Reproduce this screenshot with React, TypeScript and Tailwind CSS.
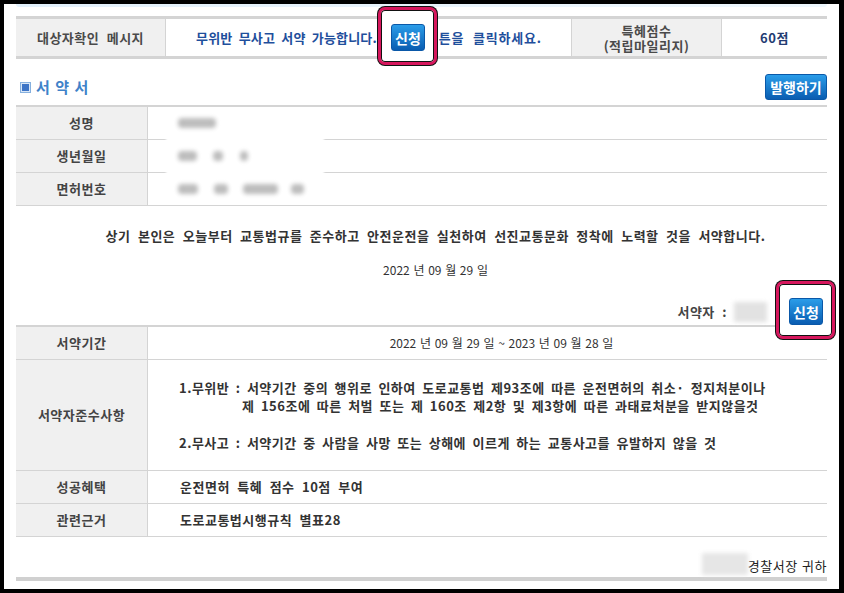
function ApplyButton() {
  return (
    <span className="relative inline-flex align-middle">
      <span className="absolute -left-[13px] -right-[12px] -top-[17px] -bottom-[14px] z-10 rounded-[7px] border-[3px] border-[#d6175d] bg-white shadow-[0_0_0_1px_#111,inset_0_0_0_1px_#111]" />
      <span className="relative z-20 flex h-[27px] w-[34px] items-center justify-center rounded-[3px] border border-[#0a58a8] bg-linear-to-b from-[#2b9de9] to-[#0a5db1] text-[14px] font-bold tracking-normal text-white [word-spacing:0px]">
        신청
      </span>
    </span>
  );
}

function Blob({ w, h = "h-[10px]", ml = "" }: { w: string; h?: string; ml?: string }) {
  return <span className={`relative z-10 inline-block rounded-sm bg-[#bdbdbd] blur-[2px] ${w} ${h} ${ml}`} />;
}

export default function App() {
  return (
    <div className="h-[593px] w-[844px] bg-black pt-[4px] pl-[4px] pr-[5px] pb-[4px] font-['Noto_Sans_CJK_KR',sans-serif] text-[13px] leading-[16px] tracking-[0.5px] [word-spacing:4px]">
      <div className="h-full bg-white px-[12px]">
        <div className="h-[3px] rounded-b-[3px] bg-linear-to-r from-[#e2f0fb] to-[#eef7fd]" />

        {/* 대상자 확인 */}
        <div className="mt-[9px] flex h-[43px] border-y-[3px] border-[#d4d4d4]">
          <div className="flex w-[150px] items-center justify-center border-r border-[#d4d4d4] bg-[#f0f0f0] font-bold text-[#4a4a4a]">
            대상자확인 메시지
          </div>
          <div className="flex w-[405px] items-center pl-[30px] font-bold tracking-[0.2px] text-[#1f4f9c] [word-spacing:3px]">
            <span>무위반 무사고 서약 가능합니다.</span>
            <span className="ml-[14px] mr-[1px] inline-flex">
              <ApplyButton />
            </span>
            <span className="tracking-[0.8px] [word-spacing:5px]">버튼을 클릭하세요.</span>
          </div>
          <div className="flex w-[151px] flex-col items-center justify-center border-x border-[#d4d4d4] bg-[#f0f0f0] text-center font-bold leading-[15px] text-[#4a4a4a]">
            <span>특혜점수</span>
            <span>(적립마일리지)</span>
          </div>
          <div className="flex flex-1 items-center justify-center font-bold text-[#233b72]">60점</div>
        </div>

        {/* 서약서 타이틀 */}
        <div className="mt-[15px] flex h-[26px] items-center justify-between">
          <div className="flex items-center pl-[4px]">
            <span className="h-[11px] w-[11px] border border-[#86b0de] bg-[#3c74c6] shadow-[inset_0_0_0_1px_#d8e6f6]" />
            <span className="ml-[5px] text-[15px] font-bold tracking-normal text-[#3f82c9] [word-spacing:2px]">서 약 서</span>
          </div>
          <button className="flex h-[26px] w-[62px] items-center justify-center rounded-[3px] border border-[#0a58a8] bg-linear-to-b from-[#2b9de9] to-[#0a5db1] text-[14px] font-bold tracking-normal text-white">
            발행하기
          </button>
        </div>

        {/* 인적사항 */}
        <div className="relative mt-[5px] border-t-2 border-[#d4d4d4]">
          <div className="absolute left-[150px] top-[23px] z-0 h-[67px] w-[158px] bg-white blur-[1px]" />
          <div className="flex h-[33px] border-b border-[#d4d4d4]">
            <div className="flex w-[132px] items-center justify-center border-r border-[#d4d4d4] bg-[#f0f0f0] font-bold text-[#444]">성명</div>
            <div className="flex flex-1 items-center pl-[30px]">
              <Blob w="w-[38px]" />
            </div>
          </div>
          <div className="flex h-[33px] border-b border-[#d4d4d4]">
            <div className="flex w-[132px] items-center justify-center border-r border-[#d4d4d4] bg-[#f0f0f0] font-bold text-[#444]">생년월일</div>
            <div className="flex flex-1 items-center pl-[30px]">
              <Blob w="w-[19px]" />
              <Blob w="w-[10px]" ml="ml-[16px]" />
              <Blob w="w-[8px]" ml="ml-[17px]" />
            </div>
          </div>
          <div className="flex h-[33px] border-b border-[#d4d4d4]">
            <div className="flex w-[132px] items-center justify-center border-r border-[#d4d4d4] bg-[#f0f0f0] font-bold text-[#444]">면허번호</div>
            <div className="flex flex-1 items-center pl-[30px]">
              <Blob w="w-[20px]" />
              <Blob w="w-[14px]" ml="ml-[16px]" />
              <Blob w="w-[35px]" ml="ml-[15px]" />
              <Blob w="w-[13px]" ml="ml-[13px]" />
            </div>
          </div>
        </div>

        {/* 서약 문구 */}
        <div className="pl-[28px] pt-[22px] text-center text-[#333]">
          <p className="font-bold">
            상기 본인은 오늘부터 교통법규를 준수하고 안전운전을 실천하여 선진교통문화 정착에 노력할 것을 서약합니다.
          </p>
          <p className="mt-[18px] text-[12px] tracking-normal [word-spacing:1px]">2022 년 09 월 29 일</p>
        </div>
        <div className="mt-[20px] flex h-[27px] items-center justify-end pr-[4px]">
          <span className="font-bold text-[#444]">서약자 :</span>
          <span className="ml-[7px] h-[20px] w-[33px] bg-[#e2e2e2] blur-[2px]" />
          <span className="ml-[22px] inline-flex">
            <ApplyButton />
          </span>
        </div>

        {/* 서약 내용 */}
        <div className="border-t-2 border-[#d4d4d4]">
          <div className="flex h-[33px] border-b border-[#d4d4d4]">
            <div className="flex w-[132px] items-center justify-center border-r border-[#d4d4d4] bg-[#f0f0f0] font-bold text-[#444]">서약기간</div>
            <div className="flex flex-1 items-center justify-center pl-[28px] text-[12px] tracking-normal text-[#333] [word-spacing:1px]">
              2022 년 09 월 29 일 ~ 2023 년 09 월 28 일
            </div>
          </div>
          <div className="flex h-[111px] border-b border-[#d4d4d4]">
            <div className="flex w-[132px] items-center justify-center border-r border-[#d4d4d4] bg-[#f0f0f0] font-bold text-[#444]">서약자준수사항</div>
            <div className="flex-1 pl-[31px] pt-[19px] font-bold leading-[18px] text-[#333] [word-spacing:3px]">
              <p>1.무위반 : 서약기간 중의 행위로 인하여 도로교통법 제93조에 따른 운전면허의 취소· 정지처분이나</p>
              <p className="pl-[63px]">제 156조에 따른 처벌 또는 제 160조 제2항 및 제3항에 따른 과태료처분을 받지않을것</p>
              <p className="mt-[19px]">2.무사고 : 서약기간 중 사람을 사망 또는 상해에 이르게 하는 교통사고를 유발하지 않을 것</p>
            </div>
          </div>
          <div className="flex h-[33px] border-b border-[#d4d4d4]">
            <div className="flex w-[132px] items-center justify-center border-r border-[#d4d4d4] bg-[#f0f0f0] font-bold text-[#444]">성공혜택</div>
            <div className="flex flex-1 items-center pl-[32px] font-bold text-[#333]">운전면허 특혜 점수 10점 부여</div>
          </div>
          <div className="flex h-[33px] border-b border-[#d4d4d4]">
            <div className="flex w-[132px] items-center justify-center border-r border-[#d4d4d4] bg-[#f0f0f0] font-bold text-[#444]">관련근거</div>
            <div className="flex flex-1 items-center pl-[32px] font-bold text-[#333]">도로교통법시행규칙 별표28</div>
          </div>
        </div>

        {/* 귀하 */}
        <div className="flex h-[40px] items-end justify-end pb-[3px]">
          <span className="mb-[-1px] h-[22px] w-[46px] bg-[#e6e6e6] blur-[2px]" />
          <span className="text-[#222] [word-spacing:1px]">경찰서장 귀하</span>
        </div>
        <div className="h-[4px] bg-[#d0d0d0]" />
      </div>
    </div>
  );
}
